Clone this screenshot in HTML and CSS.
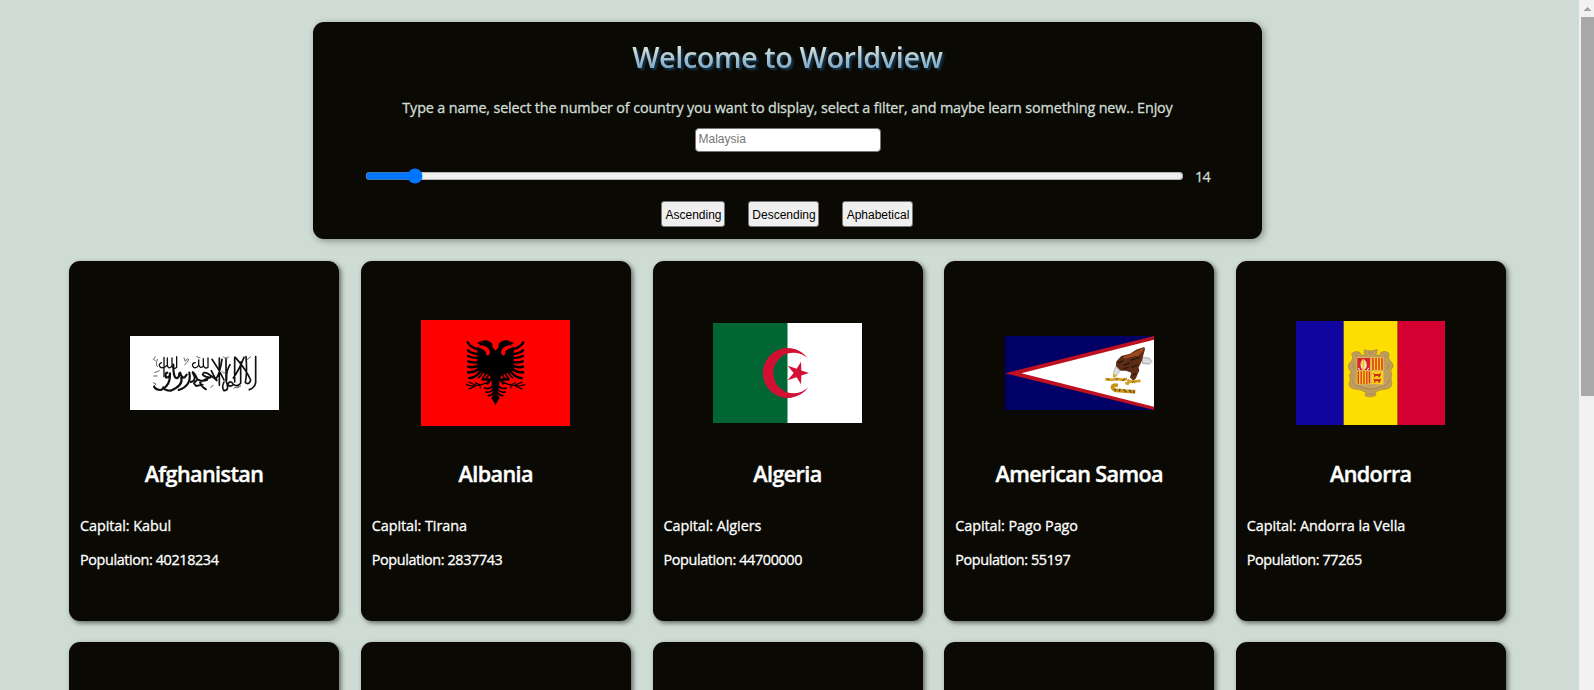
FILE: index.html
```html
<!DOCTYPE html>
<html lang="en">
<head>
<meta charset="utf-8">
<title>Worldview</title>
<link rel="stylesheet" href="styles.css">
</head>
<body>
<div class="page">
  <main class="content">
    <header class="hero">
      <h1 class="hero-title">Welcome to Worldview</h1>
      <p class="hero-text">Type a name, select the number of country you want to display, select a filter, and maybe learn something new.. Enjoy</p>
      <input class="search" type="text" placeholder="Malaysia">
      <div class="range-row">
        <input class="range" type="range" min="1" max="250" value="14">
        <span class="range-value">14</span>
      </div>
      <div class="filters">
        <button class="filter filter-asc">Ascending</button>
        <button class="filter filter-desc">Descending</button>
        <button class="filter filter-alpha">Aphabetical</button>
      </div>
    </header>

    <section class="grid">
      <article class="card">
        <div class="flag-wrap">
          <svg class="flag" style="height:74px" viewBox="30 18 447 222" preserveAspectRatio="none">
            <rect x="30" y="18" width="447" height="222" fill="#fff"/>
            <g fill="none" stroke="#111" stroke-linecap="round" stroke-linejoin="round">
              <path d="M407 80V158Q404 174 388 179M378 80Q382 130 376 158Q388 166 392 150Q378 118 346 82M372 82Q358 118 340 144M362 96V160Q352 172 342 164M338 160Q330 150 324 162Q328 174 340 164M344 82V156M330 104Q318 122 320 150M318 84V152Q330 182 312 182Q304 172 312 156M306 88Q300 130 288 146M276 88Q296 116 312 150M298 84V166M290 152Q280 136 274 122" stroke-width="5"/>
              <path d="M290 150Q274 138 262 130Q250 124 248 134Q254 142 272 142Q248 150 240 158Q244 170 258 178M262 150Q246 156 232 148L222 160L228 168L248 164M232 148Q226 132 218 126M218 128Q232 152 212 156" stroke-width="5.500"/>
              <path d="M208 128Q216 166 176 180M180 128Q186 146 194 142L200 134M184 142Q190 168 152 182Q134 182 130 172M160 104Q160 148 172 144Q178 142 178 130M142 128Q134 130 138 142Q150 144 150 130Q152 168 122 180Q108 180 102 170" stroke-width="6.500"/>
              <path d="M264 84V112Q254 118 250 106V86M250 108Q240 118 236 104V90M236 106Q224 120 218 108Q216 98 226 98M170 80V112Q162 120 156 108V84M156 108Q146 120 142 106V84M142 106Q128 118 120 110Q114 104 124 98M132 82V140" stroke-width="4"/>
              <path d="M106 80L100 88L106 92M104 128L118 122M101 138H112M100 158L108 162L102 168M192 84L196 94L202 86M194 104Q206 96 206 88M310 80L318 88L326 80M306 124L312 130L318 124M342 174L362 168M382 88L392 80M272 172L280 166M112 88Q106 104 112 110M230 80L240 84M352 174L358 170" stroke-width="3" stroke="#666"/>
            </g>
          </svg>
        </div>
        <h2 class="name">Afghanistan</h2>
        <p class="fact">Capital: Kabul</p>
        <p class="fact fact-population">Population: 40218234</p>
      </article>

      <article class="card">
        <div class="flag-wrap">
          <svg class="flag" style="height:106px" viewBox="63 60 447 318" preserveAspectRatio="none">
            <defs>
              <g id="half-eagle">
                <path d="M288 153L278 143L277 133Q270 121 254 121L243 124L230 129L240 132L237 137L246 136L259 140Q270 147 270 158Q267 168 260 166Q256 162 258 156Q252 148 240 144L232 140V210L242 216L268 226L274 236L276 262L281 282L274 294L287 315H288Z"/>
                <g fill="none" stroke="#000" stroke-linecap="round">
                  <path d="M234 148Q210 142 203 127M234 162Q214 160 204 151M234 174Q216 174 204 168M234 187Q216 189 205 184M234 198Q216 204 204 200M236 208Q218 219 204 217M242 214Q225 235 208 234" stroke-width="7.500"/>
                  <path d="M248 216Q244 228 235 233M257 219Q255 229 248 233M266 223Q264 230 260 233" stroke-width="5"/>
                  <path d="M273 237L262 250M248 238L264 238" stroke-width="8"/>
                  <path d="M262 248L241 255L214 258L199 254M229 256L207 247M228 257L207 267M240 254L226 248M240 255L241 264" stroke-width="3.500"/>
                  <path d="M280 258Q266 269 254 264M281 268Q268 280 258 276M282 277Q274 288 265 287" stroke-width="5"/>
                </g>
              </g>
            </defs>
            <rect x="63" y="60" width="447" height="318" fill="#f00"/>
            <use href="#half-eagle"/>
            <use href="#half-eagle" transform="translate(573 0) scale(-1 1)"/>
            <path d="M243 127h6M324 127h6" stroke="#a00" stroke-width="2.500"/>
          </svg>
        </div>
        <h2 class="name">Albania</h2>
        <p class="fact">Capital: Tirana</p>
        <p class="fact fact-population">Population: 2837743</p>
      </article>

      <article class="card">
        <div class="flag-wrap">
          <svg class="flag" style="height:100px" viewBox="39 39 447 300" preserveAspectRatio="none">
            <rect x="39" y="39" width="447" height="300" fill="#fff"/>
            <rect x="39" y="39" width="223.500" height="300" fill="#063"/>
            <path d="M326 148A75 75 0 1 0 326 230A61 61 0 1 1 326 148Z" fill="#d21034"/>
            <path d="M327 189L304 181.500L303 155L290 176L263 167L281 189L263 211L290 202L303 223L304 196.500Z" fill="#d21034"/>
          </svg>
        </div>
        <h2 class="name">Algeria</h2>
        <p class="fact">Capital: Algiers</p>
        <p class="fact fact-population">Population: 44700000</p>
      </article>

      <article class="card">
        <div class="flag-wrap">
          <svg class="flag" style="height:74px" viewBox="46 48 446 221" preserveAspectRatio="none">
            <rect x="46" y="48" width="446" height="221" fill="#006"/>
            <path d="M46 159L492 48V269Z" fill="#bd1021"/>
            <path d="M95 159L492 59V259Z" fill="#fff"/>
            <path d="M456 112L478 114L486 124L478 132L458 130Z" fill="#ddd" stroke="#888" stroke-width="2"/>
            <path d="M379 124L394 108L420 101L440 88L463 81L465 88L461 102L455 124L446 142L448 152L444 160L438 174L430 182L420 172L424 158L408 152L392 152L378 138Z" fill="#5a2d14"/>
            <path d="M400 110L422 102L461 83L460 92L446 106L424 111L404 117Z" fill="#9a4a1e"/>
            <path d="M384 128L400 122M400 136L420 128M424 142L442 134M422 120L450 112M428 166L438 160M400 146L416 142" stroke="#2b140a" stroke-width="4"/>
            <path d="M378 138L390 152L382 164L374 172L370 164L372 152Z" fill="#ddd" stroke="#888" stroke-width="1.500"/>
            <path d="M372 162L380 164L375 172L368 170Z" fill="#e3a61c"/>
            <path d="M346 177L366 179L380 176L400 179L412 176M406 190L424 184L452 182M418 178L412 194M432 180L438 188" fill="none" stroke="#d3a02a" stroke-width="8"/>
            <path d="M352 176L358 178M378 180L384 175M398 181L404 175M426 187L432 183" stroke="#6b4a12" stroke-width="3"/>
            <path d="M384 196Q366 192 368 203Q372 213 392 211L410 213L436 214" fill="none" stroke="#c99316" stroke-width="11"/>
            <path d="M374 206L378 212M390 206L388 214M402 207L408 216M418 208L424 218M432 210V220" stroke="#5f430f" stroke-width="3.500"/>
          </svg>
        </div>
        <h2 class="name">American Samoa</h2>
        <p class="fact">Capital: Pago Pago</p>
        <p class="fact fact-population">Population: 55197</p>
      </article>

      <article class="card">
        <div class="flag-wrap">
          <svg class="flag" style="height:104px" viewBox="48 33 447 312" preserveAspectRatio="none">
            <rect x="48" y="33" width="143" height="312" fill="#10069f"/>
            <rect x="191" y="33" width="162" height="312" fill="#fedd00"/>
            <rect x="353" y="33" width="142" height="312" fill="#d50032"/>
            <path d="M253 119L262 122H281L291 118V128L285 134L299 136L303 127Q316 120 327 130L326 145L331 153Q341 160 339 172L332 180L335 193L333 207L336 222Q333 236 318 237L300 240L286 247L288 256L272 261L255 257L258 247L243 240L224 237Q209 235 207 223L211 209L208 196L214 186L205 174Q204 160 214 154L218 145L215 131Q226 120 239 127L244 136L258 134L252 128Z" fill="#bf9d5c" stroke="#a58348" stroke-width="2"/>
            <path d="M216 208Q222 229 240 229Q262 238 272 238Q284 238 304 229Q322 229 328 208M224 160Q214 166 222 176M320 160Q330 166 322 176M225 134L232 142M318 134L311 142M264 126L272 131L280 126M262 252H282" fill="none" stroke="#a58348" stroke-width="2.500"/>
            <path d="M222 214Q230 226 250 227L272 232L294 227Q314 226 322 214" fill="none" stroke="#cdb074" stroke-width="3"/>
            <rect x="229" y="141" width="83" height="83" fill="#d7b45c"/>
            <rect x="232" y="144" width="38" height="36" fill="#d8232a"/>
            <path d="M243 172Q239 154 250 147Q263 154 259 172L254 179H247Z" fill="#f5edc8"/>
            <path d="M250 148V178M242 160H246M256 160H260" stroke="#edbc25" stroke-width="5"/>
            <path d="M234 174L240 179M268 174L261 179" stroke="#fff" stroke-width="3"/>
            <rect x="275" y="144" width="34" height="36" fill="#fcd116"/>
            <path d="M279 144V180M288 144V180M297 144V180M306 144V180" stroke="#d8332a" stroke-width="4.500"/>
            <rect x="232" y="184" width="38" height="38" fill="#fcd116"/>
            <path d="M235 184V222M243.500 184V222M252 184V222M260.500 184V222M268 184V220" stroke="#d8332a" stroke-width="4"/>
            <rect x="275" y="184" width="34" height="38" fill="#fcd116"/>
            <path d="M279 189L286 192H298L302 187V196L299 202H295V198H286V202H282V195ZM279 206L286 208H298L302 204V212L299 218H295V214H286V218H282V211Z" fill="#cf2a1c"/>
          </svg>
        </div>
        <h2 class="name">Andorra</h2>
        <p class="fact">Capital: Andorra la Vella</p>
        <p class="fact fact-population">Population: 77265</p>
      </article>

      <article class="card"></article>
      <article class="card"></article>
      <article class="card"></article>
      <article class="card"></article>
      <article class="card"></article>
    </section>
  </main>

  <aside class="scrollbar">
    <svg class="scroll-arrow" viewBox="0 0 15 17"><path d="M5 11V10H6V9H7V8H8V7H9V8H10V9H11V10H12V11Z" fill="#a3a3a3"/></svg>
    <div class="scroll-thumb"></div>
  </aside>
</div>
</body>
</html>
```
FILE: styles.css
```css
* {
  box-sizing: border-box;
}

body {
  margin: 0;
  height: 690px;
  overflow: hidden;
  background: #cfdcd5;
  font-family: "Trebuchet MS", "Open Sans", sans-serif;
  font-size: 14.4px;
  font-weight: 400;
}

.page {
  display: flex;
  height: 690px;
}

.content {
  flex: 1;
  height: 690px;
  overflow: hidden;
  padding: 22px 73px 0 69px;
}

.hero {
  display: flex;
  flex-direction: column;
  align-items: center;
  width: 949px;
  height: 217px;
  margin: 0 auto 22px;
  padding-top: 15px;
  border-radius: 11px;
  background: #0a0903;
  box-shadow: 2px 2px 7px rgba(0, 0, 0, 0.35);
  color: #cfdcd5;
}

.hero-title {
  margin: 0 0 21px;
  font-size: 28.8px;
  font-weight: 600;
  line-height: 40px;
  letter-spacing: -0.4px;
  white-space: nowrap;
  background: linear-gradient(#dbe4da 25%, #6d9fc6 85%);
  -webkit-background-clip: text;
  background-clip: text;
  color: transparent;
  filter: drop-shadow(2px 2px 1px #16364f);
}

.hero-text {
  margin: 0;
  line-height: 20px;
  letter-spacing: -0.155px;
  white-space: nowrap;
  -webkit-text-stroke: 0.3px;
}

.search {
  width: 186px;
  height: 24px;
  margin: 10px 0 0;
  padding: 0 3px 2px;
  border: 1px solid #767676;
  border-radius: 4px;
  background: #fff;
  font: 12px "Liberation Sans", Arial, sans-serif;
}

.search::placeholder {
  color: #757575;
}

.range-row {
  display: flex;
  align-items: center;
  align-self: stretch;
  gap: 11px;
  height: 16px;
  margin: 16px 0 17px 52px;
}

.range {
  width: 819px;
  height: 16px;
  margin: 0;
}

.range-value {
  letter-spacing: -0.8px;
  -webkit-text-stroke: 0.3px;
}

.filters {
  display: flex;
  gap: 23px;
  margin-right: 1px;
}

.filter {
  height: 26px;
  padding: 1px 0 0 1px;
  border: 1px solid #767676;
  border-radius: 3px;
  background: #efefef;
  color: #000;
  font: 12px "Liberation Sans", Arial, sans-serif;
}

.filter-asc {
  width: 64px;
}

.filter-desc {
  width: 71px;
}

.filter-alpha {
  width: 71px;
}

.grid {
  display: grid;
  grid-template-columns: repeat(5, 270px);
  column-gap: 21.75px;
  grid-auto-rows: 360px;
  row-gap: 21px;
}

.card {
  padding: 26px 11px 0;
  border-radius: 11px;
  background: #0a0903;
  box-shadow: 2px 2px 5px rgba(0, 0, 0, 0.55);
  color: #fff;
}

.card:nth-child(5n) {
  margin: 0 0.25px 0 -0.25px;
}

.flag-wrap {
  display: flex;
  align-items: center;
  justify-content: center;
  height: 172px;
}

.flag {
  display: block;
  width: 149px;
}

.name {
  margin: 0 0 27px;
  font-size: 21.6px;
  font-weight: 600;
  line-height: 30px;
  letter-spacing: -0.6px;
  text-align: center;
  white-space: nowrap;
  -webkit-text-stroke: 0.4px;
}

.fact {
  margin: 0 0 14px;
  line-height: 20px;
  letter-spacing: -0.06px;
  -webkit-text-stroke: 0.3px;
}

.fact-population {
  letter-spacing: -0.38px;
}

.scrollbar {
  width: 15px;
  background: #f1f1f1;
}

.scroll-arrow {
  display: block;
  width: 15px;
  height: 17px;
}

.scroll-thumb {
  height: 379px;
  margin-left: 2px;
  background: #a8a8a8;
}
```
